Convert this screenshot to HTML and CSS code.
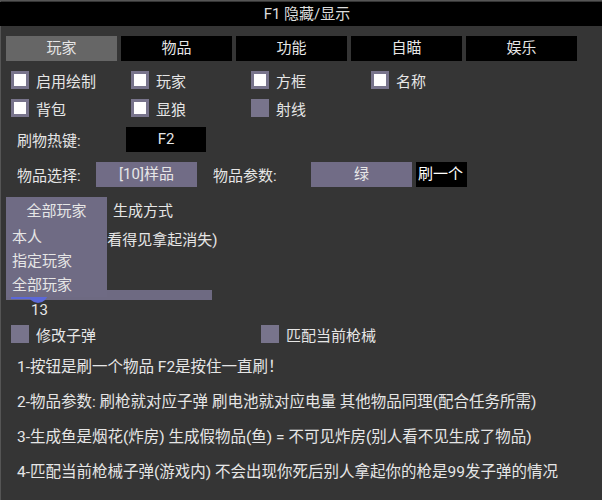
FILE: index.html
```html
<!DOCTYPE html>
<html lang="zh-CN">
<head>
    <meta charset="UTF-8">
    <meta name="viewport" content="width=device-width, initial-scale=1.0">
    <title>F1 隐藏/显示</title>
    <link rel="stylesheet" href="styles.css">
</head>
<body>
    <div class="window">
        <div class="titlebar">F1 隐藏/显示</div>

        <div class="tabs">
            <div class="tab active">玩家</div>
            <div class="tab">物品</div>
            <div class="tab">功能</div>
            <div class="tab">自瞄</div>
            <div class="tab">娱乐</div>
        </div>

        <div class="checks">
            <div class="check"><span class="box"></span>启用绘制</div>
            <div class="check"><span class="box"></span>玩家</div>
            <div class="check"><span class="box"></span>方框</div>
            <div class="check"><span class="box"></span>名称</div>
            <div class="check"><span class="box"></span>背包</div>
            <div class="check"><span class="box"></span>显狼</div>
            <div class="check"><span class="box off"></span>射线</div>
        </div>

        <div class="field-row hotkey">
            <span class="label label-hotkey">刷物热键:</span>
            <span class="keybox">F2</span>
        </div>

        <div class="field-row">
            <span class="label label-item">物品选择:</span>
            <span class="select">[10]样品</span>
            <span class="label label-param">物品参数:</span>
            <span class="select">绿</span>
            <span class="btn">刷一个</span>
        </div>

        <div class="spawn">
            <div class="spawn-title">生成方式</div>
            <div class="spawn-note">(别人看得见拿起消失)</div>
            <div class="slider">
                <span class="slider-fill"></span>
                <span class="slider-thumb"></span>
            </div>
            <div class="slider-value">13</div>

            <!-- 下拉菜单 (展开状态) -->
            <div class="dropdown">
                <div class="dd-head">全部玩家</div>
                <div class="dd-item">本人</div>
                <div class="dd-item">指定玩家</div>
                <div class="dd-item">全部玩家</div>
            </div>
        </div>

        <div class="checks checks-ammo">
            <div class="check"><span class="box off"></span>修改子弹</div>
            <div class="check"><span class="box off"></span>匹配当前枪械</div>
        </div>

        <div class="notes">
            <p>1-按钮是刷一个物品 F2是按住一直刷！</p>
            <p>2-物品参数: 刷枪就对应子弹 刷电池就对应电量 其他物品同理(配合任务所需)</p>
            <p>3-生成鱼是烟花(炸房) 生成假物品(鱼) = 不可见炸房(别人看不见生成了物品)</p>
            <p>4-匹配当前枪械子弹(游戏内) 不会出现你死后别人拿起你的枪是99发子弹的情况</p>
        </div>
    </div>
</body>
</html>
```

FILE: styles.css
```css
* {
    margin: 0;
    padding: 0;
    box-sizing: border-box;
}

body {
    background: #353535;
    color: #e6e6e6;
    font-family: Roboto, "Noto Sans CJK SC", sans-serif;
    font-size: 15px;
}

.window {
    position: relative;
    width: 602px;
    height: 500px;
    overflow: hidden;
    box-shadow: inset 1px 1px 0 #555;
}

.titlebar {
    margin-top: 2px;
    height: 24px;
    line-height: 24px;
    background: #000;
    color: #ddd;
    text-align: center;
    padding-left: 12px;
}

.tabs {
    display: flex;
    gap: 4px;
    margin: 10px 0 0 6px;
}

.tab {
    width: 111px;
    height: 25px;
    line-height: 25px;
    text-align: center;
    background: #000;
}

.tab.active {
    background: #666;
}

.checks {
    display: grid;
    grid-template-columns: repeat(4, 120px);
    row-gap: 10px;
    margin: 10px 0 0 11px;
}

.check {
    display: flex;
    align-items: center;
    gap: 7px;
    height: 18px;
}

.box {
    flex: none;
    width: 18px;
    height: 18px;
    border: 3px solid #78748c;
    background: #fff;
}

.box.off {
    background: #78748c;
}

.field-row {
    display: flex;
    align-items: center;
    height: 25px;
    margin: 10px 0 0 17px;
}

.label-hotkey {
    width: 109px;
}

.label-item {
    width: 79px;
}

.label-param {
    width: 98px;
    margin-left: 16px;
}

.keybox {
    width: 80px;
    height: 25px;
    line-height: 25px;
    text-align: center;
    background: #000;
}

.select {
    width: 101px;
    height: 25px;
    line-height: 25px;
    text-align: center;
    background: #716c86;
}

.btn {
    width: 51px;
    height: 25px;
    line-height: 25px;
    margin-left: 4px;
    padding-left: 2px;
    background: #000;
    color: #fff;
}

.spawn {
    position: relative;
    margin-top: 10px;
}

.spawn-title {
    height: 28px;
    line-height: 28px;
    padding-left: 113px;
}

.spawn-note {
    height: 30px;
    line-height: 30px;
    padding-left: 72px;
}

.slider {
    position: relative;
    width: 206px;
    height: 10px;
    margin: 35px 0 0 6px;
    background: #6e6a82;
}

.slider-fill {
    position: absolute;
    left: 5px;
    top: 7px;
    width: 27px;
    height: 2px;
    background: #5b68d8;
}

.slider-thumb {
    position: absolute;
    left: 22px;
    top: -7px;
    width: 20px;
    height: 20px;
    border-radius: 50%;
    background: #5b68d8;
}

.slider-value {
    height: 20px;
    line-height: 20px;
    padding-left: 31px;
}

.dropdown {
    position: absolute;
    left: 6px;
    top: 0;
    z-index: 2;
    width: 101px;
    height: 100px;
    overflow: hidden;
    background: #6f6b84;
}

.dd-head {
    height: 28px;
    line-height: 28px;
    text-align: center;
}

.dd-item {
    height: 24px;
    line-height: 24px;
    padding-left: 6px;
}

.checks-ammo {
    grid-template-columns: 250px 250px;
    margin-top: 5px;
}

.notes {
    margin: 7px 0 0 17px;
    font-size: 15.5px;
}

.notes p {
    line-height: 35px;
    white-space: nowrap;
}
```
